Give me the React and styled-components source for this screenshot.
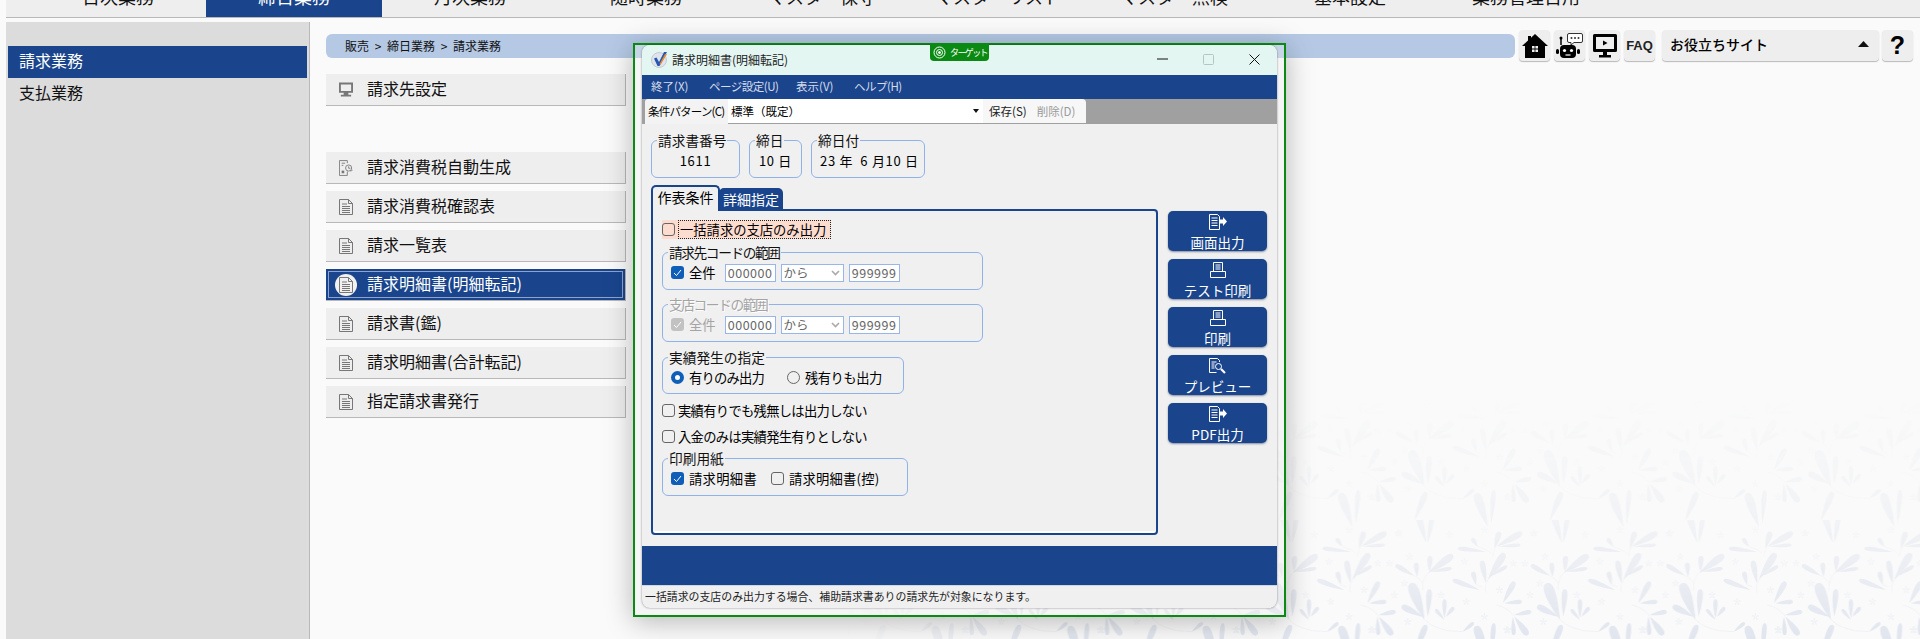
import React from "react";
import styled, { createGlobalStyle } from "styled-components";

const BLUE = "#1a458d";
const GROUP_LINE = "#8fb2ea";
const FONT = `"Noto Sans CJK JP", "Noto Sans", sans-serif`;

const GlobalStyle = createGlobalStyle`
  html, body {
    margin: 0;
    padding: 0;
    height: 100%;
    background: #fafafa;
    font-family: ${FONT};
    color: #000;
  }
`;

const Page = styled.div`
  position: relative;
  display: flex;
  flex-direction: column;
  height: 100vh;
  padding-left: 6px;
  box-sizing: border-box;
  overflow: hidden;
`;

/* top navigation, scrolled so only the feet of the labels show */
const Nav = styled.div`
  position: relative;
  display: flex;
  flex: none;
  height: 18px;
  margin-bottom: 4px;
  padding-left: 24px;
  box-sizing: border-box;
  background: #eeeeee;
  border-bottom: 1px solid #b8b8b8;
  overflow: hidden;
`;

const NavTab = styled.div`
  flex: none;
  display: flex;
  align-items: flex-end;
  justify-content: center;
  width: 176px;
  height: 17px;
  padding-bottom: 12px;
  box-sizing: border-box;
  font-size: 18px;
  line-height: 18px;
  white-space: nowrap;
  color: ${(p) => (p.$active ? "#fff" : "#111")};
  background: ${(p) => (p.$active ? BLUE : "transparent")};
`;

const Body = styled.div`
  position: relative;
  display: flex;
  flex: 1;
  min-height: 0;
`;

const Sidebar = styled.div`
  flex: none;
  width: 304px;
  padding: 24px 2px 0;
  box-sizing: border-box;
  background: #dcdcdc;
  border-right: 1px solid #b9b9b9;
`;

const SideItem = styled.div`
  height: 32px;
  padding-left: 11px;
  font-size: 16px;
  line-height: 29px;
  color: ${(p) => (p.$active ? "#fff" : "#111")};
  background: ${(p) => (p.$active ? BLUE : "transparent")};
`;

const Main = styled.div`
  flex: 1;
  min-width: 0;
  padding: 8px 7px 0 16px;
`;

const HeaderRow = styled.div`
  display: flex;
  align-items: flex-start;
  margin-bottom: 13px;
`;

const Breadcrumb = styled.div`
  flex: 1;
  height: 24px;
  margin-top: 4px;
  padding-left: 19px;
  border-radius: 6px;
  background: #b5c9e5;
  font-size: 12px;
  line-height: 23px;
  word-spacing: 3px;
  color: #111;
`;

const ToolGroup = styled.div`
  display: flex;
  margin-left: 3px;
`;

const ToolButton = styled.div`
  display: flex;
  align-items: center;
  justify-content: center;
  width: ${(p) => (p.$wide ? "217px" : "31px")};
  height: 31px;
  margin-left: ${(p) => p.$gap || 4}px;
  border-radius: 4px;
  background: #eeeeee;
  box-shadow: 0 1px 1px #b9b9b9;
`;

const SiteButton = styled(ToolButton)`
  justify-content: space-between;
  padding: 0 10px 3px 8px;
  box-sizing: border-box;
  font-size: 14px;
  font-weight: 500;
`;

const FaqLabel = styled.span`
  font-family: "Liberation Sans", sans-serif;
  font-size: 13px;
  font-weight: 700;
  color: #222;
`;

const HelpLabel = styled.span`
  font-family: "Liberation Sans", sans-serif;
  font-size: 25px;
  font-weight: 700;
  line-height: 1;
`;

const MenuList = styled.div`
  display: flex;
  flex-direction: column;
  gap: 7px;
  width: 300px;
  margin-top: ${(p) => p.$top || 0}px;
`;

const MenuButton = styled.div`
  display: flex;
  align-items: center;
  height: 32px;
  box-sizing: border-box;
  padding: 0 0 3px 13px;
  font-size: 16px;
  color: ${(p) => (p.$active ? "#fff" : "#111")};
  background: ${(p) => (p.$active ? BLUE : "#eeeeee")};
  border-right: 1px solid #b8b8b8;
  border-bottom: 1px solid #b8b8b8;
  box-shadow: ${(p) => (p.$active ? "inset 0 0 0 2px " + BLUE + ", inset 0 0 0 3px #8ea4cc" : "none")};
`;

const MenuIcon = styled.span`
  display: flex;
  align-items: center;
  justify-content: center;
  flex: none;
  width: 14px;
  height: 22px;
  margin: 3px 14px 0 0;
  position: relative;
  &::before {
    content: "";
    display: ${(p) => (p.$active ? "block" : "none")};
    position: absolute;
    left: -4px;
    top: 0;
    width: 22px;
    height: 22px;
    border-radius: 50%;
    background: #f1f1f1;
  }
  svg {
    position: relative;
  }
`;

const Wallpaper = styled.svg`
  position: absolute;
  left: 0;
  top: 0;
  width: 100%;
  height: 100%;
  pointer-events: none;
  mask-image: linear-gradient(to bottom, transparent 62%, rgba(0, 0, 0, 0.35) 82%, #000 100%),
    linear-gradient(to right, transparent 44%, #000 54%);
  mask-composite: intersect;
`;

/* dialog and its green "target" frame, floating over the page */
const Frame = styled.div`
  position: absolute;
  left: 633px;
  top: 43px;
  width: 653px;
  height: 574px;
  box-sizing: border-box;
  padding: 0 7px 7px 7px;
  border: 2px solid #0a8a12;
  background: rgba(235, 235, 235, 0.35);
  box-shadow: 0 4px 26px rgba(0, 0, 0, 0.28);
`;

const TargetBadge = styled.div`
  position: absolute;
  left: 295px;
  top: -2px;
  display: flex;
  align-items: center;
  gap: 4px;
  height: 18px;
  width: 59px;
  padding-left: 3px;
  box-sizing: border-box;
  border-radius: 0 0 4px 4px;
  background: #0a8a12;
  color: #fff;
  font-size: 9px;
  letter-spacing: -1.6px;
  white-space: nowrap;
  svg {
    flex: none;
  }
`;

const Window = styled.div`
  display: flex;
  flex-direction: column;
  height: 100%;
  background: #f0f0f0;
  border-radius: 8px;
  overflow: hidden;
  box-shadow: 0 0 2px rgba(0, 0, 0, 0.5);
`;

const TitleBar = styled.div`
  display: flex;
  align-items: center;
  flex: none;
  height: 30px;
  padding: 0 0 2px 9px;
  box-sizing: border-box;
  background: #e3f6f2;
  font-size: 12px;
  color: #222;
`;

const TitleText = styled.span`
  flex: 1;
  margin-left: 4px;
`;

const WinControl = styled.span`
  display: flex;
  align-items: center;
  justify-content: center;
  width: 46px;
  height: 28px;
`;

const MenuBar = styled.div`
  display: flex;
  flex: none;
  height: 24px;
  padding-left: 9px;
  background: ${BLUE};
  font-size: 11.5px;
  line-height: 23px;
  color: #d5dcea;
`;

const MenuBarItem = styled.span`
  width: ${(p) => p.$w}px;
  letter-spacing: ${(p) => p.$tight || 0}px;
`;

const ToolBar = styled.div`
  display: flex;
  flex: none;
  height: 25px;
  padding-left: 3px;
  background: #a0a0a0;
  font-size: 11.5px;
  line-height: 24px;
`;

const PatternLabel = styled.div`
  width: 83px;
  padding-left: 3px;
  box-sizing: border-box;
  letter-spacing: -0.8px;
  background: #f3f3f3;
  border-top-left-radius: 3px;
  white-space: nowrap;
`;

const PatternCombo = styled.div`
  display: flex;
  justify-content: space-between;
  align-items: center;
  width: 255px;
  height: 24px;
  padding: 0 4px 0 3px;
  box-sizing: border-box;
  background: #fff;
`;

const ToolBarActions = styled.div`
  display: flex;
  gap: 10px;
  width: 103px;
  height: 24px;
  padding-left: 6px;
  box-sizing: border-box;
  background: #f7f7f7;
  border-radius: 0 4px 0 0;
  white-space: nowrap;
`;

const ToolBarAction = styled.span`
  color: ${(p) => (p.$muted ? "#9a9a9a" : "#222")};
`;

const Content = styled.div`
  display: flex;
  flex-direction: column;
  flex: 1;
  min-height: 0;
  padding: 7px 9px 11px;
`;

const InfoRow = styled.div`
  display: flex;
  gap: 9px;
  margin-bottom: 7px;
`;

const Group = styled.fieldset`
  margin: ${(p) => p.$top || 0}px 0 0;
  padding: 2px 8px ${(p) => p.$bottom ?? 7}px;
  width: ${(p) => p.$w}px;
  box-sizing: border-box;
  border: 1px solid ${GROUP_LINE};
  border-radius: 6px;
  min-width: 0;
  flex: none;
`;

const GroupTitle = styled.legend`
  margin-left: -3px;
  padding: 0 1px;
  font-size: 13.7px;
  line-height: 18px;
  letter-spacing: ${(p) => p.$tight || 0}px;
  color: ${(p) => (p.$disabled ? "#a4a4a4" : "#111")};
  text-shadow: ${(p) => (p.$disabled ? "1px 1px 0 #fff" : "none")};
  white-space: nowrap;
`;

const InfoValue = styled.div`
  height: 26px;
  font-size: 13px;
  line-height: 20px;
  letter-spacing: 0.7px;
  text-align: center;
  white-space: pre;
`;

const FormArea = styled.div`
  display: flex;
  flex: 1;
  min-height: 0;
`;

const TabsColumn = styled.div`
  display: flex;
  flex-direction: column;
  width: 507px;
`;

const TabStrip = styled.div`
  display: flex;
  align-items: flex-end;
  position: relative;
  z-index: 1;
  height: 26px;
  margin-bottom: -2px;
`;

const Tab = styled.div`
  box-sizing: border-box;
  font-size: 14px;
  text-align: center;
  white-space: nowrap;
  border-radius: 5px 5px 0 0;
  ${(p) =>
    p.$active
      ? `
    width: 69px;
    height: 26px;
    line-height: 21px;
    background: #f0f0f0;
    border: 2px solid ${BLUE};
    border-bottom: 0;
  `
      : `
    width: 64px;
    height: 23px;
    margin-left: -1px;
    line-height: 22px;
    background: ${BLUE};
    color: #fff;
  `}
`;

const Panel = styled.div`
  flex: 1;
  display: flex;
  flex-direction: column;
  align-items: flex-start;
  box-sizing: border-box;
  padding: 9px 9px 0;
  border: 2px solid ${BLUE};
  border-radius: 0 4px 4px 4px;
  box-shadow: inset 0 -2px 0 #fff;
`;

const Row = styled.div`
  display: flex;
  align-items: center;
  height: 19px;
  font-size: 13.3px;
  white-space: nowrap;
  margin-top: ${(p) => p.$top || 0}px;
`;

const FocusRow = styled(Row)`
  background: #fddcd0;
`;

const FocusText = styled.span`
  height: 19px;
  padding: 0 4px 0 1px;
  margin-left: 3px;
  line-height: 18px;
  box-sizing: border-box;
  border: 1px dotted #222;
`;

const Tight = styled.span`
  letter-spacing: ${(p) => p.$by}px;
`;

const Box = styled.span`
  display: inline-flex;
  align-items: center;
  justify-content: center;
  flex: none;
  width: 13px;
  height: 13px;
  box-sizing: border-box;
  margin-right: ${(p) => p.$gap ?? 5}px;
  border-radius: 3px;
  background: ${(p) => (p.$on ? (p.$disabled ? "#c2c2c2" : "#0f5fb8") : "transparent")};
  border: ${(p) => (p.$on ? "0" : "1px solid #666")};
`;

const Radio = styled.span`
  flex: none;
  width: 13px;
  height: 13px;
  box-sizing: border-box;
  margin-right: 5px;
  border-radius: 50%;
  border: ${(p) => (p.$on ? "4px solid #0f5fb8" : "1px solid #666")};
  background: ${(p) => (p.$on ? "#fff" : "transparent")};
`;

const Spacer = styled.span`
  width: ${(p) => p.$w}px;
  flex: none;
`;

const Muted = styled.span`
  color: ${(p) => (p.$on ? "#a4a4a4" : "inherit")};
`;

const CodeBox = styled.span`
  display: flex;
  align-items: center;
  justify-content: center;
  flex: none;
  width: 51px;
  height: 18px;
  box-sizing: border-box;
  margin-left: ${(p) => p.$gap || 0}px;
  border: 1px solid #98b6ea;
  background: #fff;
  color: #666;
  font-size: 12.5px;
  letter-spacing: 0.5px;
`;

const SelectBox = styled.span`
  display: flex;
  align-items: center;
  justify-content: space-between;
  flex: none;
  width: 63px;
  height: 18px;
  box-sizing: border-box;
  margin-left: 5px;
  margin-right: 5px;
  padding: 0 3px 0 2px;
  border: 1px solid #98b6ea;
  background: #fff;
  color: #666;
  font-size: 12.5px;
`;

const ActionColumn = styled.div`
  display: flex;
  flex-direction: column;
  gap: 8px;
  margin: 26px 0 0 10px;
`;

const ActionButton = styled.div`
  display: flex;
  flex-direction: column;
  align-items: center;
  width: 99px;
  height: 40px;
  box-sizing: border-box;
  padding-top: 3px;
  border-radius: 5px;
  background: ${BLUE};
  box-shadow: 0 1px 2px rgba(30, 40, 80, 0.5);
  color: #fff;
  font-size: 13.5px;
  line-height: 14px;
`;

const ActionLabel = styled.span`
  margin-top: 5px;
  white-space: nowrap;
`;

const BlueBar = styled.div`
  flex: none;
  height: 39px;
  background: ${BLUE};
`;

const StatusBar = styled.div`
  flex: none;
  height: 23px;
  box-sizing: border-box;
  padding-left: 3px;
  border-top: 1px solid #cfd6e4;
  font-size: 10.9px;
  line-height: 21px;
  color: #222;
  white-space: nowrap;
`;

/* ---- drawings ---- */

const DocIcon = () => (
  <svg width="14" height="16" viewBox="0 0 14 16" fill="none" stroke="#777" strokeWidth="1">
    <path d="M.5.5h9l4 4v11H.5z" />
    <path d="M9.5.5v4h4M3 5h5M3 7.5h8M3 9.5h8M3 11.5h8M3 13.5h8" />
  </svg>
);

const MonitorIcon = () => (
  <svg width="15" height="16" viewBox="0 0 15 16" fill="#777">
    <path d="M0 0h15v11H0zM2 2v7h11V2zM5 11h5v2H5zM2 13h11v2H2z" fillRule="evenodd" />
  </svg>
);

const AutoIcon = () => (
  <svg width="16" height="18" viewBox="0 0 16 18" fill="none" stroke="#777" strokeWidth="1">
    <path d="M9.5 13v4.5H.5V.5h9v3" />
    <path d="M3 3.5h4M3 6h2" />
    <rect x="3" y="12" width="3" height="3" fill="#777" stroke="none" />
    <circle cx="11" cy="9" r="3.5" />
    <path d="M11 7v2.3h2M13.5 13l2-2" />
  </svg>
);

const HomeIcon = () => (
  <svg width="26" height="24" viewBox="0 0 26 24" fill="#000">
    <path d="M13 0 26 12h-3v12H3V12H0L6 6.500V2h3v1.700z" />
    <path d="M10 12h2.600v2.600H10zM13.400 12H16v2.600h-2.600zM10 15.400h2.600V18H10zM13.400 15.400H16V18h-2.600z" fill="#eee" />
  </svg>
);

const BotIcon = () => (
  <svg width="28" height="28" viewBox="0 0 28 28">
    <path d="M13 1.500h12a1.500 1.500 0 0 1 1.500 1.500v6a1.500 1.500 0 0 1-1.500 1.500h-7l-3 2.500v-2.500h-2a1.500 1.500 0 0 1-1.500-1.500V3A1.500 1.500 0 0 1 13 1.500z" fill="#fff" stroke="#333" />
    <circle cx="15.500" cy="6" r="1" fill="#333" />
    <circle cx="19" cy="6" r="1" fill="#333" />
    <circle cx="22.500" cy="6" r="1" fill="#333" />
    <path d="M5 7v6" stroke="#000" strokeWidth="1.500" />
    <circle cx="5" cy="6" r="1.500" fill="#000" />
    <rect x="4" y="13" width="16" height="13" rx="4" fill="#000" />
    <rect x="0" y="17" width="3" height="5" rx="1.500" fill="#000" />
    <rect x="21" y="17" width="3" height="5" rx="1.500" fill="#000" />
    <circle cx="8.500" cy="18.500" r="1.600" fill="#fff" />
    <circle cx="15.500" cy="18.500" r="1.600" fill="#fff" />
    <path d="M9.500 23h5" stroke="#fff" strokeWidth="1.200" />
  </svg>
);

const ScreenIcon = () => (
  <svg width="24" height="24" viewBox="0 0 24 24" fill="#000">
    <path fillRule="evenodd" d="M1.500 0h21A1.500 1.500 0 0 1 24 1.500v15a1.500 1.500 0 0 1-1.500 1.500h-21A1.500 1.500 0 0 1 0 16.500v-15A1.500 1.500 0 0 1 1.500 0zM3 3v12h18V3z" />
    <path d="M10 6.500v5l4.500-2.500zM10 18h4v3h-4zM6 21h12v2.500H6z" />
  </svg>
);

const AppIcon = () => (
  <svg width="17" height="17" viewBox="0 0 17 17">
    <circle cx="8" cy="9" r="7.500" fill="#dfe3ec" stroke="#c4c9d4" />
    <path d="M3 7.500 5.500 6.500 8 11 13 1h3L8.500 15H6.500z" fill="#2558b4" />
    <path d="M8.500 13 14 3h2l-6.500 11z" fill="#e98a2b" />
  </svg>
);

const TargetIcon = () => (
  <svg width="13" height="13" viewBox="0 0 13 13" fill="none" stroke="#fff">
    <circle cx="6.500" cy="6.500" r="5.500" />
    <circle cx="6.500" cy="6.500" r="3" />
    <circle cx="6.500" cy="6.500" r="1" fill="#fff" />
  </svg>
);

const Tick = () => (
  <svg width="9" height="8" viewBox="0 0 9 8" fill="none" stroke="#fff" strokeWidth="1">
    <path d="M1 4l2.500 2.500L8 1" />
  </svg>
);

const Chevron = () => (
  <svg width="9" height="6" viewBox="0 0 9 6" fill="none" stroke="#aaa" strokeWidth="1.600">
    <path d="M1 1l3.500 3.500L8 1" />
  </svg>
);

const DocArrow = () => (
  <svg width="18" height="16" viewBox="0 0 18 16" fill="none" stroke="#fff">
    <path d="M.5.500h8l2 2v13H.5z" />
    <path d="M2.500 4h6M2.500 6.500h6M2.500 9h6M2.500 11.500h6" />
    <path d="M11 5.500h3V3l4 4.500-4 4.500V9.500h-3z" fill="#fff" stroke="none" />
  </svg>
);

const PrinterIcon = () => (
  <svg width="16" height="16" viewBox="0 0 16 16" fill="none" stroke="#fff">
    <path d="M3.500 9V.500h9V9M.5 9.500h15v6H.5z" />
    <path d="M5.500 3h5M5.500 5h5M5.500 7h5" />
  </svg>
);

const DocSearch = () => (
  <svg width="17" height="16" viewBox="0 0 17 16" fill="none" stroke="#fff">
    <path d="M10.500 4V2.500l-2-2h-8v14h7" />
    <path d="M2.500 4h5M2.500 6h3M2.500 8h3M2.500 10h3" />
    <circle cx="9.500" cy="8.500" r="3" />
    <path d="M12 11l4 4" strokeWidth="2.200" />
  </svg>
);

const leafPath = ([bx, by, tx, ty, w]) => {
  const vx = tx - bx;
  const vy = ty - by;
  const len = Math.hypot(vx, vy);
  const nx = (-vy / len) * w;
  const ny = (vx / len) * w;
  const pt = (t, s) => `${bx + vx * t + nx * s} ${by + vy * t + ny * s}`;
  return `M${bx} ${by}C${pt(0.55, 0.75)} ${pt(1.02, 1)} ${tx} ${ty}C${pt(1.02, -1)} ${pt(0.55, -0.75)} ${bx} ${by}Z`;
};

const LEAVES = [
  [150, 168, 93, 135, 11], [158, 170, 155, 128, 11], [190, 160, 265, 105, 17], [195, 155, 197, 108, 12], [200, 155, 262, 145, 9],
  [180, 300, 140, 190, 24], [190, 290, 195, 208, 13], [175, 290, 112, 258, 15],
  [240, 300, 213, 268, 8], [240, 295, 240, 238, 10], [245, 290, 268, 262, 9],
  [345, 210, 265, 180, 11], [335, 195, 325, 155, 11], [365, 190, 352, 122, 13], [370, 180, 420, 100, 17], [375, 170, 428, 138, 9],
  [365, 95, 280, 85, 10], [340, 80, 322, 55, 10], [390, 85, 405, 35, 13], [395, 80, 472, 38, 15], [400, 80, 468, 75, 8],
  [415, 250, 450, 185, 13], [420, 250, 472, 245, 10], [450, 285, 500, 275, 10], [450, 290, 490, 345, 15], [445, 290, 448, 345, 10],
  [185, 68, 158, -25, 15], [190, 68, 203, -10, 11],
  [150, 400, 185, 315, 14], [370, 420, 335, 318, 20], [380, 410, 388, 310, 11], [295, 335, 328, 308, 8],
];

const STEMS = [
  "M175 210C172 190 180 170 190 160M175 190C170 180 160 172 150 168",
  "M180 298C200 320 225 325 250 332L295 335",
  "M365 218C360 205 365 190 370 180M352 200L335 195",
  "M385 110C385 100 390 90 395 80M380 100C370 90 355 85 340 80",
  "M395 255C420 260 440 275 450 290",
];

const STARS = [
  [100, 40], [255, 45], [300, 125], [405, 210], [305, 245], [130, 305], [40, 130], [75, 130], [510, 40],
  [360, 30], [230, 225], [90, 225], [430, 330], [360, 290], [20, 330], [135, 110], [120, 190],
];

const starPath = ([x, y]) =>
  [0, 1, 2, 3, 4]
    .map((i) => {
      const a = ((i * 72 - 90) * Math.PI) / 180;
      return leafPath([x, y, x + Math.cos(a) * 11, y + Math.sin(a) * 11, 3.5]);
    })
    .join("");

const Motif = () => (
  <>
    <g fill="#e1e5ee">
      {LEAVES.map((l, i) => (
        <path key={i} d={leafPath(l)} />
      ))}
    </g>
    <path d={STEMS.join("")} fill="none" stroke="#e6e9f1" strokeWidth="1.500" />
    <g fill="#eef0f5">
      {STARS.map((s, i) => (
        <path key={i} d={starPath(s)} />
      ))}
    </g>
  </>
);

const Flowers = () => (
  <Wallpaper>
    <defs>
      <pattern
        id="flowers"
        width="406.500"
        height="399"
        patternUnits="userSpaceOnUse"
        patternTransform="translate(1500 520) scale(0.3333)"
      >
        {[-406.5, 0].map((x) =>
          [-399, 0].map((y) => (
            <g key={`${x}${y}`} transform={`translate(${x} ${y})`}>
              <Motif />
            </g>
          ))
        )}
      </pattern>
    </defs>
    <rect width="100%" height="100%" fill="url(#flowers)" />
  </Wallpaper>
);

/* ---- data ---- */

const NAV_TABS = ["日次業務", "締日業務", "月次業務", "随時業務", "マスター保守", "マスターリスト", "マスター点検", "基本設定", "業務管理日用"];

const REPORTS = [
  { label: "請求消費税自動生成", icon: <AutoIcon /> },
  { label: "請求消費税確認表", icon: <DocIcon /> },
  { label: "請求一覧表", icon: <DocIcon /> },
  { label: "請求明細書(明細転記)", icon: <DocIcon />, active: true },
  { label: "請求書(鑑)", icon: <DocIcon /> },
  { label: "請求明細書(合計転記)", icon: <DocIcon /> },
  { label: "指定請求書発行", icon: <DocIcon /> },
];

const ACTIONS = [
  { label: "画面出力", icon: <DocArrow /> },
  { label: "テスト印刷", icon: <PrinterIcon /> },
  { label: "印刷", icon: <PrinterIcon /> },
  { label: "プレビュー", icon: <DocSearch /> },
  { label: "PDF出力", icon: <DocArrow /> },
];

const CodeRange = ({ disabled }) => (
  <Row>
    <Box $on $disabled={disabled}>
      <Tick />
    </Box>
    <Muted $on={disabled}>全件</Muted>
    <CodeBox $gap={9}>000000</CodeBox>
    <SelectBox>
      から
      <Chevron />
    </SelectBox>
    <CodeBox>999999</CodeBox>
  </Row>
);

const Dialog = () => (
  <Frame>
    <TargetBadge>
      <TargetIcon />
      ターゲット
    </TargetBadge>
    <Window>
      <TitleBar>
        <AppIcon />
        <TitleText>請求明細書(明細転記)</TitleText>
        <WinControl>
          <svg width="11" height="2" viewBox="0 0 11 2">
            <path d="M0 1h11" stroke="#111" strokeWidth="1" />
          </svg>
        </WinControl>
        <WinControl>
          <svg width="11" height="11" viewBox="0 0 11 11" fill="none">
            <rect x=".5" y=".5" width="10" height="10" rx="1" stroke="#b5c5c2" />
          </svg>
        </WinControl>
        <WinControl>
          <svg width="11" height="11" viewBox="0 0 11 11">
            <path d="M.5.5l10 10M10.500.5l-10 10" stroke="#111" strokeWidth="1" />
          </svg>
        </WinControl>
      </TitleBar>
      <MenuBar>
        <MenuBarItem $w={58}>終了(X)</MenuBarItem>
        <MenuBarItem $w={87} $tight={-0.5}>ページ設定(U)</MenuBarItem>
        <MenuBarItem $w={58}>表示(V)</MenuBarItem>
        <MenuBarItem $w={60} $tight={-0.5}>ヘルプ(H)</MenuBarItem>
      </MenuBar>
      <ToolBar>
        <PatternLabel>条件パターン(C)</PatternLabel>
        <PatternCombo>
          標準（既定）
          <svg width="6" height="4" viewBox="0 0 6 4">
            <path d="M0 0h6L3 4z" fill="#111" />
          </svg>
        </PatternCombo>
        <ToolBarActions>
          <ToolBarAction>保存(S)</ToolBarAction>
          <ToolBarAction $muted>削除(D)</ToolBarAction>
        </ToolBarActions>
      </ToolBar>
      <Content>
        <InfoRow>
          <Group $w={89} $bottom={0}>
            <GroupTitle>請求書番号</GroupTitle>
            <InfoValue>1611</InfoValue>
          </Group>
          <Group $w={53} $bottom={0}>
            <GroupTitle>締日</GroupTitle>
            <InfoValue>10 日</InfoValue>
          </Group>
          <Group $w={114} $bottom={0}>
            <GroupTitle>締日付</GroupTitle>
            <InfoValue>23 年  6 月10 日</InfoValue>
          </Group>
        </InfoRow>
        <FormArea>
          <TabsColumn>
            <TabStrip>
              <Tab $active>作表条件</Tab>
              <Tab>詳細指定</Tab>
            </TabStrip>
            <Panel>
              <FocusRow>
                <Box $gap={0} />
                <FocusText>一括請求の支店のみ出力</FocusText>
              </FocusRow>
              <Group $w={321} $top={4}>
                <GroupTitle $tight={-1.4}>請求先コードの範囲</GroupTitle>
                <CodeRange />
              </Group>
              <Group $w={321} $top={5}>
                <GroupTitle $disabled $tight={-1.4}>支店コードの範囲</GroupTitle>
                <CodeRange disabled />
              </Group>
              <Group $w={242} $top={6} $bottom={6}>
                <GroupTitle>実績発生の指定</GroupTitle>
                <Row>
                  <Radio $on />
                  <Tight $by={-0.8}>有りのみ出力</Tight>
                  <Spacer $w={23} />
                  <Radio />
                  <Tight $by={-0.5}>残有りも出力</Tight>
                </Row>
              </Group>
              <Row $top={7}>
                <Box $gap={3} />
                <Tight $by={-0.7}>実績有りでも残無しは出力しない</Tight>
              </Row>
              <Row $top={7}>
                <Box $gap={3} />
                <Tight $by={-0.7}>入金のみは実績発生有りとしない</Tight>
              </Row>
              <Group $w={246} $top={3}>
                <GroupTitle>印刷用紙</GroupTitle>
                <Row>
                  <Box $on>
                    <Tick />
                  </Box>
                  <Tight $by={0.3}>請求明細書</Tight>
                  <Spacer $w={14} />
                  <Box />
                  <Tight $by={0.2}>請求明細書(控)</Tight>
                </Row>
              </Group>
            </Panel>
          </TabsColumn>
          <ActionColumn>
            {ACTIONS.map((a) => (
              <ActionButton key={a.label}>
                {a.icon}
                <ActionLabel>{a.label}</ActionLabel>
              </ActionButton>
            ))}
          </ActionColumn>
        </FormArea>
      </Content>
      <BlueBar />
      <StatusBar>一括請求の支店のみ出力する場合、補助請求書ありの請求先が対象になります。</StatusBar>
    </Window>
  </Frame>
);

export default function App() {
  return (
    <Page>
      <GlobalStyle />
      <Flowers />
      <Nav>
        {NAV_TABS.map((t) => (
          <NavTab key={t} $active={t === "締日業務"}>
            {t}
          </NavTab>
        ))}
      </Nav>
      <Body>
        <Sidebar>
          <SideItem $active>請求業務</SideItem>
          <SideItem>支払業務</SideItem>
        </Sidebar>
        <Main>
          <HeaderRow>
            <Breadcrumb>販売 &gt; 締日業務 &gt; 請求業務</Breadcrumb>
            <ToolGroup>
              <ToolButton $gap={1}>
                <HomeIcon />
              </ToolButton>
              <ToolButton>
                <BotIcon />
              </ToolButton>
              <ToolButton>
                <ScreenIcon />
              </ToolButton>
              <ToolButton>
                <FaqLabel>FAQ</FaqLabel>
              </ToolButton>
              <SiteButton $wide $gap={7}>
                お役立ちサイト
                <svg width="11" height="6" viewBox="0 0 11 6">
                  <path d="M5.500 0L11 6H0z" fill="#111" />
                </svg>
              </SiteButton>
              <ToolButton $gap={3}>
                <HelpLabel>?</HelpLabel>
              </ToolButton>
            </ToolGroup>
          </HeaderRow>
          <MenuList>
            <MenuButton>
              <MenuIcon>
                <MonitorIcon />
              </MenuIcon>
              請求先設定
            </MenuButton>
          </MenuList>
          <MenuList $top={46}>
            {REPORTS.map((r) => (
              <MenuButton key={r.label} $active={r.active}>
                <MenuIcon $active={r.active}>{r.icon}</MenuIcon>
                {r.label}
              </MenuButton>
            ))}
          </MenuList>
        </Main>
      </Body>
      <Dialog />
    </Page>
  );
}
